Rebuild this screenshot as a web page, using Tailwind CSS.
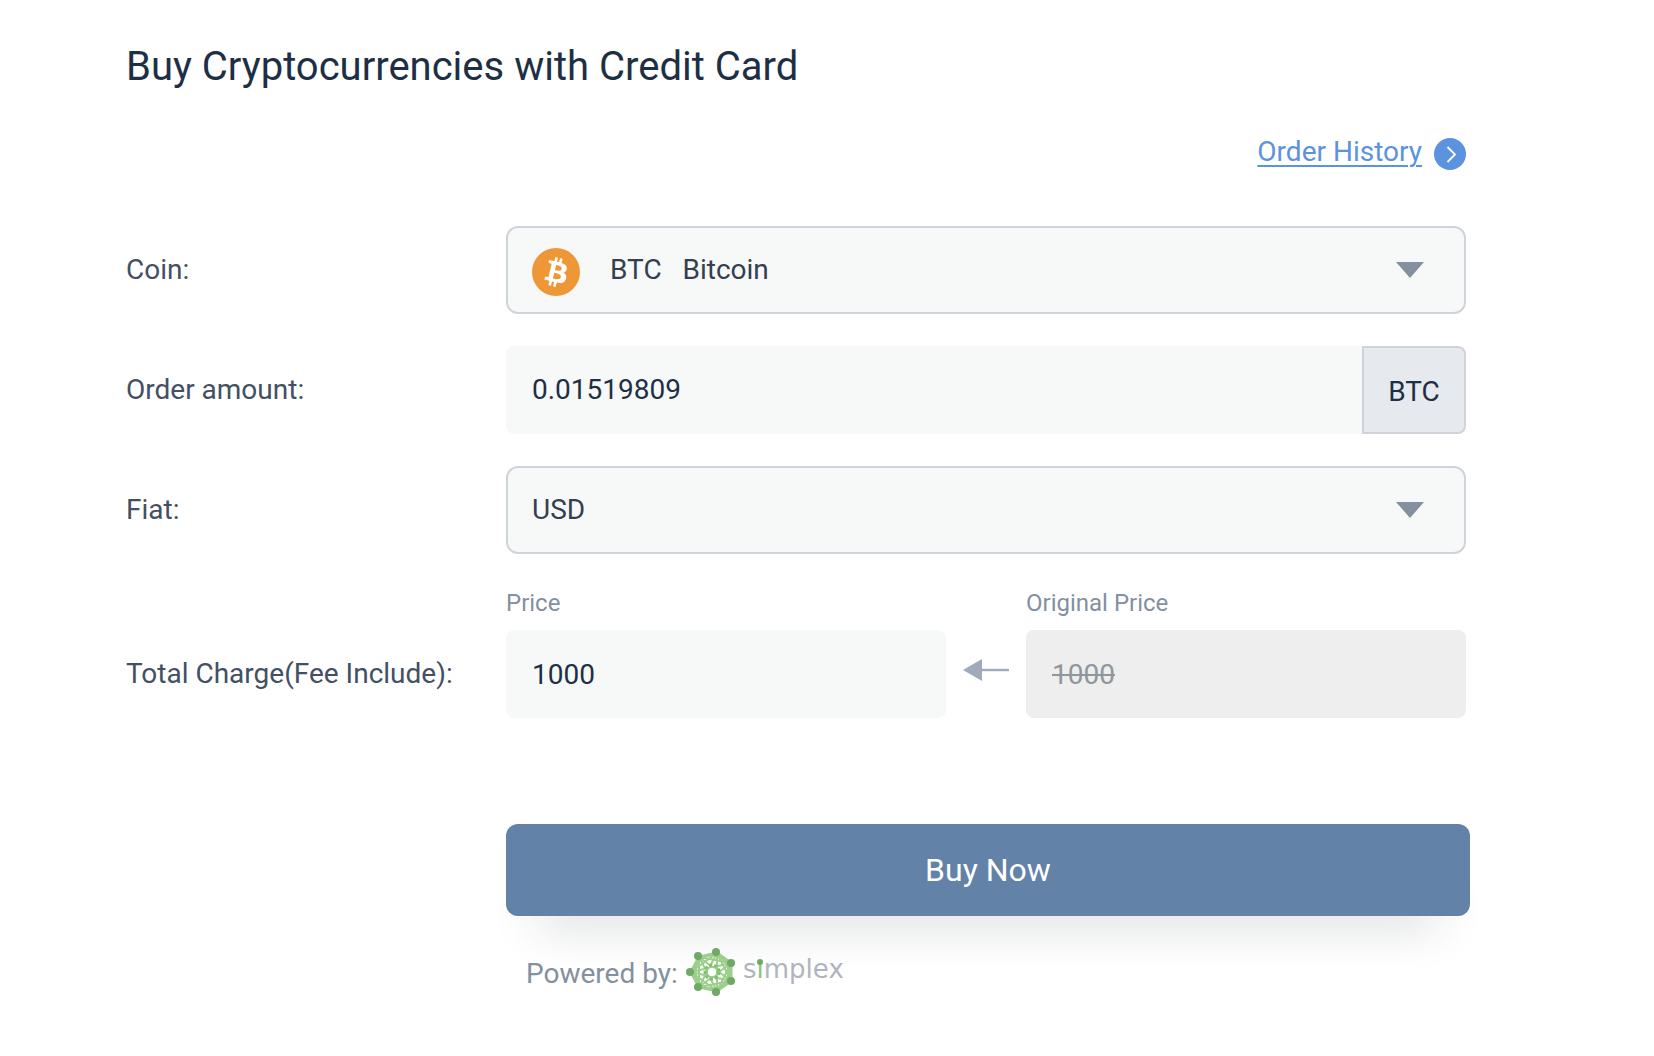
<!DOCTYPE html>
<html lang="en">
<head>
  <meta charset="UTF-8" />
  <title>Buy Cryptocurrencies with Credit Card</title>
  <meta name="viewport" content="width=device-width, initial-scale=1.0">
  <!-- Tailwind CDN -->
  <script src="https://cdn.jsdelivr.net/npm/@tailwindcss/browser@4"></script>
</head>
<body class="bg-white min-h-screen font-['Roboto',sans-serif] text-[28px] leading-10 text-[#1e2f45]">
  <main class="max-w-[1470px] pl-[126px] pt-10">
    <h1 class="text-[40px] leading-[54px]">Buy Cryptocurrencies with Credit Card</h1>

    <div class="flex justify-end mt-[38px] mr-1">
      <a href="#" class="flex items-center gap-3 text-[#5b93df]">
        <span class="underline underline-offset-4 decoration-2">Order History</span>
        <svg class="w-8 h-8 mt-1" viewBox="0 0 32 32" fill="none">
          <circle cx="16" cy="16" r="16" fill="#5b93df" />
          <path d="M13.5 9 L21 16.5 L13.5 24" stroke="#fff" stroke-width="1.8" />
        </svg>
      </a>
    </div>

    <form onsubmit="return false">
      <div class="mt-[54px] mr-1 flex flex-col gap-8">
        <!-- Coin -->
        <div class="flex items-center">
          <label for="coin" class="w-[380px] shrink-0 text-[#435063]">Coin:</label>
          <div class="relative flex-1">
            <select id="coin" class="appearance-none w-full h-[88px] pl-[102px] pr-20 rounded-xl border-2 border-[#cfd4da] bg-[#f7f9f9] text-[#343f4f]">
              <option>BTC&nbsp;&nbsp; Bitcoin</option>
              <option>ETH&nbsp;&nbsp; Ethereum</option>
            </select>
            <svg class="absolute left-[26px] top-[22px] w-12 h-12 pointer-events-none" viewBox="0 0 32 32">
              <circle cx="16" cy="16" r="16" fill="#ee9737" />
              <path fill="#fff" fill-rule="evenodd" d="M23.189 14.02c.314-2.096-1.283-3.223-3.465-3.975l.708-2.84-1.728-.43-.69 2.765c-.454-.114-.92-.22-1.385-.326l.695-2.783L15.596 6l-.708 2.839c-.376-.086-.746-.17-1.104-.26l.002-.009-2.384-.595-.46 1.846s1.283.294 1.256.312c.7.175.826.638.805 1.006l-.806 3.235c.048.012.11.03.18.057l-.183-.045-1.13 4.532c-.086.212-.303.531-.793.41.018.025-1.256-.313-1.256-.313l-.858 1.978 2.25.561c.418.105.828.215 1.231.318l-.715 2.872 1.727.43.708-2.84c.472.127.93.245 1.378.357l-.706 2.828 1.728.43.715-2.866c2.948.558 5.164.333 6.097-2.333.752-2.146-.037-3.385-1.588-4.192 1.13-.26 1.98-1.003 2.207-2.538zm-3.95 5.538c-.533 2.147-4.148.986-5.32.695l.95-3.805c1.172.293 4.929.872 4.37 3.11zm.535-5.569c-.487 1.953-3.495.96-4.47.717l.86-3.45c.975.243 4.118.696 3.61 2.733z" />
            </svg>
            <svg class="absolute right-[42px] top-9 w-7 h-4 pointer-events-none" viewBox="0 0 28 16">
              <path d="M0 0 H28 L14 16 Z" fill="#84909f" />
            </svg>
          </div>
        </div>

        <!-- Order amount -->
        <div class="flex items-center">
          <label for="amount" class="w-[380px] shrink-0 text-[#435063]">Order amount:</label>
          <div class="flex flex-1 h-[88px]">
            <input id="amount" type="text" value="0.01519809" class="flex-1 min-w-0 px-[26px] rounded-l-lg bg-[#f7f9f9]">
            <span class="flex items-center justify-center w-[104px] rounded-r-lg border-2 border-[#cfd4da] bg-[#e6e9ed] pt-1">BTC</span>
          </div>
        </div>

        <!-- Fiat -->
        <div class="flex items-center">
          <label for="fiat" class="w-[380px] shrink-0 text-[#435063]">Fiat:</label>
          <div class="relative flex-1">
            <select id="fiat" class="appearance-none w-full h-[88px] pl-6 pr-20 rounded-xl border-2 border-[#cfd4da] bg-[#f7f9f9] text-[#343f4f]">
              <option>USD</option>
              <option>EUR</option>
            </select>
            <svg class="absolute right-[42px] top-9 w-7 h-4 pointer-events-none" viewBox="0 0 28 16">
              <path d="M0 0 H28 L14 16 Z" fill="#84909f" />
            </svg>
          </div>
        </div>

        <!-- Total -->
        <div class="flex items-end">
          <label for="price" class="flex items-center w-[380px] h-[88px] shrink-0 text-[#435063]">Total Charge(Fee Include):</label>
          <div class="flex-1">
            <label for="price" class="block text-2xl leading-[34px] mb-2.5 text-[#8390a0]">Price</label>
            <input id="price" type="text" value="1000" class="block w-full h-[88px] px-[26px] rounded-lg bg-[#f7f9f9]">
          </div>
          <div class="flex items-center justify-center w-20 h-24">
            <svg class="w-[46px] h-[22px]" viewBox="0 0 46 22">
              <path d="M0 11 L19 0 V22 Z" fill="#a0aabb" />
              <path d="M18 11 H46" stroke="#a0aabb" stroke-width="2.4" />
            </svg>
          </div>
          <div class="flex-1">
            <label for="original" class="block text-2xl leading-[34px] mb-2.5 text-[#8390a0]">Original Price</label>
            <input id="original" type="text" value="1000" disabled class="block w-full h-[88px] px-[26px] rounded-lg bg-[#eeeeee] text-[#8f979c] line-through">
          </div>
        </div>
      </div>

      <div class="pl-[380px] mt-[106px]">
        <button type="submit" class="w-full h-[92px] rounded-xl bg-[#6282a8] text-white text-[32px] shadow-[0_40px_48px_-32px_rgba(30,40,50,0.2)]">Buy Now</button>
        <div class="flex items-center pl-5 mt-8 text-[#8390a0]">
          <span class="pt-1">Powered by:</span>
          <svg class="w-[162px] h-12 ml-2" viewBox="0 0 162 48">
            <g fill="none" stroke="#9ccf8b" stroke-width="2">
              <path stroke-width="3" d="M5 24 L13 9 L31 5 L45 15 V33 L31 43 L13 39 Z" />
              <path d="M5 24 L31 5 L45 33 L13 39 L13 9 L45 15 L31 43 Z" />
              <path d="M5 24 L45 15 L13 39 L31 5 L31 43 L13 9 L45 33 Z" />
              <circle cx="26" cy="24" r="17" stroke-width="3" />
              <circle cx="26" cy="24" r="7" stroke="#82bd71" stroke-width="3" stroke-dasharray="3 2" />
            </g>
            <circle cx="26" cy="24" r="4" fill="#fff" />
            <g fill="#6fa965">
              <circle cx="4" cy="24" r="4" />
              <circle cx="12" cy="8" r="4" />
              <circle cx="30" cy="4" r="4" />
              <circle cx="45" cy="15" r="4" />
              <circle cx="45" cy="33" r="4" />
              <circle cx="30" cy="44" r="4" />
              <circle cx="12" cy="39" r="4" />
            </g>
            <text x="57" y="30" font-family="DejaVu Sans, sans-serif" font-size="26" fill="#b0b5bd">s<tspan fill="#8cc57b">ı</tspan>mplex</text>
            <circle cx="74" cy="14" r="3" fill="#6fa965" />
          </svg>
        </div>
      </div>
    </form>
  </main>
</body>
</html>
